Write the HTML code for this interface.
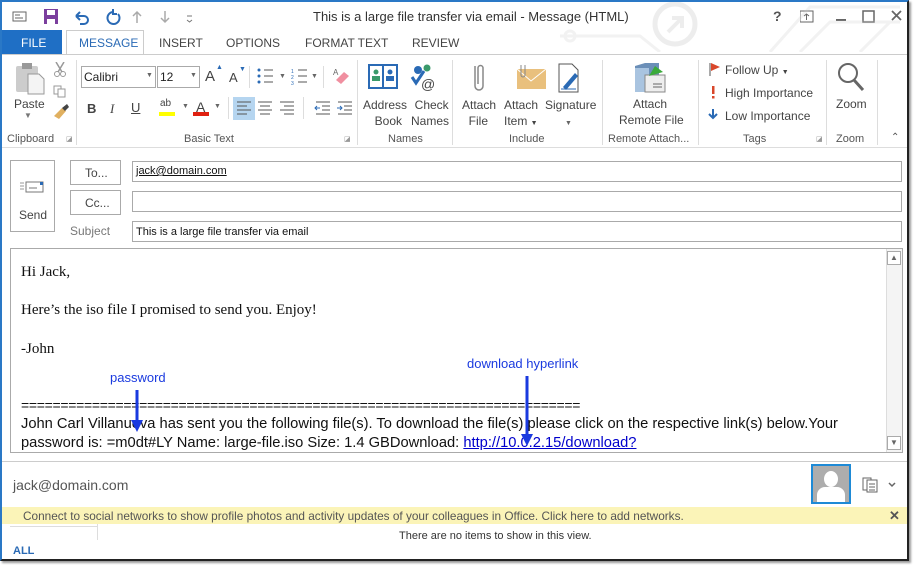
<!DOCTYPE html>
<html><head><style>
*{margin:0;padding:0;box-sizing:border-box}
body{width:914px;height:565px;background:#fff;font-family:"Liberation Sans",sans-serif;position:relative;overflow:hidden}
.a{position:absolute}
.win{left:0;top:0;width:909px;height:561px;border-left:2px solid #2a78c6;border-top:2px solid #2a78c6;border-right:2px solid #222;border-bottom:2px solid #222;box-shadow:2px 2px 2px #999}
.t{position:absolute;font-size:12px;color:#444;white-space:nowrap}
.lbl{font-size:11px;color:#555}
.box{position:absolute;border:1px solid #aaa;background:#fff}
.sep{position:absolute;width:1px;background:#ddd}
.ser{font-family:"Liberation Serif",serif;font-size:15px;color:#111;position:absolute;white-space:nowrap}
</style></head><body>
<div class="a win"></div>
<svg class="a" style="left:12px;top:8px" width="200" height="18">
<rect x="1" y="4" width="13" height="9" fill="none" stroke="#666"/><line x1="3" y1="7" x2="8" y2="7" stroke="#666"/><line x1="3" y1="10" x2="11" y2="10" stroke="#666"/>
<rect x="32" y="1" width="14" height="15" fill="#7b3f9e"/><rect x="35" y="2" width="8" height="5" fill="#fff"/><rect x="35" y="11" width="8" height="5" fill="#fff"/>
<path d="M64 8 h8 a4 4 0 0 1 0 8 h-4 M64 8 l4 -4 M64 8 l4 4" fill="none" stroke="#2a6ab5" stroke-width="2"/>
<path d="M101 4 a6 6 0 1 0 5 2 M101 1 v5 h4" fill="none" stroke="#2a6ab5" stroke-width="2"/>
<path d="M125 15 v-11 M121 8 l4-4 4 4" stroke="#aaa" fill="none" stroke-width="1.5"/>
<path d="M153 3 v11 M149 10 l4 4 4-4" stroke="#aaa" fill="none" stroke-width="1.5"/>
<path d="M175 8 h5 M175 12 l2.5 2 2.5-2" stroke="#777" fill="none"/>
</svg>
<div class="t" style="left:313px;top:9px;font-size:13px;color:#333">This is a large file transfer via email - Message (HTML)</div>
<div class="t" style="left:773px;top:8px;font-size:14px;font-weight:bold;color:#555">?</div>
<svg class="a" style="left:800px;top:9px" width="110" height="16"><rect x="0" y="2" width="13" height="11" fill="none" stroke="#666"/><path d="M6.5 11 v-6 M4 7 l2.5-2 2.5 2" stroke="#666" fill="none"/><line x1="36" y1="11" x2="46" y2="11" stroke="#666" stroke-width="2"/><rect x="63" y="2" width="11" height="11" fill="none" stroke="#666" stroke-width="1.5"/><path d="M92 2 l9 9 M101 2 l-9 9" stroke="#666" stroke-width="1.8"/></svg>
<svg class="a" style="left:560px;top:2px" width="345" height="50" opacity="0.25"><circle cx="115" cy="22" r="20" fill="none" stroke="#bbb" stroke-width="5"/><path d="M108 30 l14-14 M112 16 h10 v10" stroke="#bbb" stroke-width="4" fill="none"/><path d="M0 34 h80 l20 16 M240 50 l30-30 h70 M210 50 l40-45 h90 M300 50 l30-30" stroke="#ccc" stroke-width="3" fill="none"/><circle cx="10" cy="34" r="5" fill="none" stroke="#ccc" stroke-width="3"/></svg>
<div class="a" style="left:2px;top:30px;width:60px;height:24px;background:#1f6fc5"></div>
<div class="t" style="left:21px;top:36px;color:#fff">FILE</div>
<div class="a" style="left:66px;top:30px;width:78px;height:25px;border:1px solid #ccc;border-bottom:none;background:#fff"></div>
<div class="t" style="left:79px;top:36px;color:#2a6ab5">MESSAGE</div>
<div class="t" style="left:159px;top:36px">INSERT</div>
<div class="t" style="left:226px;top:36px">OPTIONS</div>
<div class="t" style="left:305px;top:36px">FORMAT TEXT</div>
<div class="t" style="left:412px;top:36px">REVIEW</div>
<div class="a" style="left:2px;top:54px;width:905px;height:1px;background:#ccc"></div>
<div class="a" style="left:2px;top:147px;width:905px;height:1px;background:#ddd"></div>
<svg class="a" style="left:14px;top:62px" width="60" height="60"><rect x="2" y="4" width="22" height="26" fill="#ccc" rx="2"/><rect x="8" y="1" width="10" height="6" fill="#999"/><path d="M14 12 h11 l5 5 v15 h-16z" fill="#f4f4f4" stroke="#999"/><path d="M42 0 l6 10 M50 0 l-6 10" stroke="#999" stroke-width="1.5"/><circle cx="43" cy="12" r="2.5" fill="none" stroke="#999"/><circle cx="49" cy="12" r="2.5" fill="none" stroke="#999"/><rect x="40" y="24" width="7" height="8" fill="none" stroke="#999"/><rect x="44" y="27" width="7" height="8" fill="#fff" stroke="#999"/><path d="M40 54 l8-8 4 3 -7 8z" fill="#e0b060"/><path d="M48 46 l5-4 2 3 -4 4" fill="#444"/></svg>
<div class="t" style="left:14px;top:97px">Paste</div>
<div class="t" style="left:24px;top:111px;font-size:8px;color:#777">▼</div>
<div class="t lbl" style="left:7px;top:133px">Clipboard</div>
<div class="t" style="left:66px;top:135px;font-size:7px;color:#999">◪</div>
<div class="sep" style="left:76px;top:60px;height:85px"></div>
<div class="box" style="left:81px;top:66px;width:75px;height:22px"></div><div class="t" style="left:84px;top:70px;color:#222">Calibri</div><div class="t" style="left:146px;top:72px;font-size:7px;color:#666">▼</div>
<div class="box" style="left:157px;top:66px;width:43px;height:22px"></div><div class="t" style="left:160px;top:70px;color:#222">12</div><div class="t" style="left:190px;top:72px;font-size:7px;color:#666">▼</div>
<div class="t" style="left:205px;top:68px;font-size:15px">A</div><div class="t" style="left:216px;top:64px;font-size:7px;color:#2a6ab5">▲</div>
<div class="t" style="left:229px;top:70px;font-size:13px">A</div><div class="t" style="left:239px;top:66px;font-size:7px;color:#2a6ab5">▼</div>
<div class="sep" style="left:249px;top:66px;height:22px"></div>
<svg class="a" style="left:256px;top:67px" width="60" height="20"><g fill="#2a6ab5"><circle cx="3" cy="3" r="1.5"/><circle cx="3" cy="9" r="1.5"/><circle cx="3" cy="15" r="1.5"/></g><g stroke="#555"><line x1="8" y1="3" x2="17" y2="3"/><line x1="8" y1="9" x2="17" y2="9"/><line x1="8" y1="15" x2="17" y2="15"/><line x1="42" y1="3" x2="51" y2="3"/><line x1="42" y1="9" x2="51" y2="9"/><line x1="42" y1="15" x2="51" y2="15"/></g><text x="35" y="6" font-size="5" fill="#2a6ab5">1</text><text x="35" y="12" font-size="5" fill="#2a6ab5">2</text><text x="35" y="18" font-size="5" fill="#2a6ab5">3</text></svg>
<div class="t" style="left:279px;top:73px;font-size:7px;color:#666">▼</div><div class="t" style="left:311px;top:73px;font-size:7px;color:#666">▼</div>
<div class="sep" style="left:323px;top:66px;height:22px"></div>
<svg class="a" style="left:332px;top:66px" width="20" height="20"><path d="M4 14 l8-8 5 4 -8 8z" fill="#f08fa0"/><text x="1" y="9" font-size="8" fill="#666">A</text></svg>
<div class="t" style="left:87px;top:101px;font-weight:bold;font-size:13px">B</div>
<div class="t" style="left:110px;top:101px;font-style:italic;font-size:13px;font-family:'Liberation Serif',serif">I</div>
<div class="t" style="left:131px;top:100px;text-decoration:underline;font-size:13px">U</div>
<div class="t" style="left:160px;top:98px;font-size:10px">ab</div><div class="a" style="left:159px;top:112px;width:16px;height:4px;background:#ff0"></div><div class="t" style="left:182px;top:103px;font-size:7px;color:#666">▼</div>
<div class="t" style="left:196px;top:99px;font-size:14px">A</div><div class="a" style="left:193px;top:112px;width:16px;height:4px;background:#e02010"></div><div class="t" style="left:214px;top:103px;font-size:7px;color:#666">▼</div>
<div class="sep" style="left:228px;top:97px;height:22px"></div>
<div class="a" style="left:233px;top:97px;width:22px;height:23px;background:#b5d5f0"></div>
<svg class="a" style="left:236px;top:101px" width="120" height="14"><g stroke="#555"><path d="M1 1h14M1 5h10M1 9h14M1 13h10"/><path d="M22 1h14M24 5h10M22 9h14M24 13h10"/><path d="M44 1h14M48 5h10M44 9h14M48 13h10"/><path d="M80 1h14M86 5h8M86 9h8M80 13h14"/><path d="M102 1h14M108 5h8M108 9h8M102 13h14"/></g><path d="M84 7h-5 M81 5l-2 2 2 2" stroke="#2a6ab5" fill="none"/><path d="M101 7h5 M104 5l2 2-2 2" stroke="#2a6ab5" fill="none"/></svg>
<div class="sep" style="left:303px;top:97px;height:22px"></div>
<div class="t lbl" style="left:184px;top:133px">Basic Text</div>
<div class="t" style="left:344px;top:135px;font-size:7px;color:#999">◪</div>
<div class="sep" style="left:357px;top:60px;height:85px"></div>
<svg class="a" style="left:367px;top:63px" width="70" height="30"><rect x="1" y="1" width="30" height="25" fill="#2a6ab5"/><rect x="3" y="3" width="12" height="21" fill="#fff"/><rect x="17" y="3" width="12" height="21" fill="#fff"/><circle cx="9" cy="9" r="2.5" fill="#3a9a6a"/><rect x="5" y="13" width="8" height="5" fill="#3a9a6a"/><circle cx="23" cy="9" r="2.5" fill="#2a6ab5"/><rect x="19" y="13" width="8" height="5" fill="#2a6ab5"/><circle cx="51" cy="7" r="4" fill="#2a6ab5"/><circle cx="60" cy="5" r="3.5" fill="#3a9a6a"/><path d="M45 14 l4 6 8-12" stroke="#2a6ab5" stroke-width="3" fill="none"/><text x="54" y="26" font-size="14" fill="#444">@</text></svg>
<div class="t" style="left:363px;top:97px;text-align:center;line-height:16px">Address<br>&nbsp;&nbsp;Book</div>
<div class="t" style="left:411px;top:97px;text-align:center;line-height:16px">&nbsp;Check<br>Names</div>
<div class="t lbl" style="left:388px;top:133px">Names</div>
<div class="sep" style="left:452px;top:60px;height:85px"></div>
<svg class="a" style="left:468px;top:63px" width="120" height="30"><path d="M7 3 v20 a4 4 0 0 0 8 0 v-18 a2.5 2.5 0 0 0 -5 0 v16" fill="none" stroke="#888" stroke-width="1.5"/><rect x="49" y="6" width="29" height="20" fill="#e9c07d"/><path d="M49 6 l14 12 15-12" fill="none" stroke="#fff"/><path d="M53 2 v10 a2 2 0 0 0 4 0 v-10" fill="none" stroke="#888"/><path d="M91 1 h13 l6 6 v22 h-19z" fill="#fff" stroke="#555"/><path d="M95 24 l12-14 3 3 -12 14z" fill="#2a6ab5"/><line x1="93" y1="26" x2="108" y2="26" stroke="#2a6ab5"/></svg>
<div class="t" style="left:462px;top:97px;line-height:16px">Attach<br>&nbsp;&nbsp;File</div>
<div class="t" style="left:504px;top:97px;line-height:16px">Attach<br>Item <span style="font-size:7px">▼</span></div>
<div class="t" style="left:545px;top:97px;line-height:16px">Signature<br>&nbsp;&nbsp;&nbsp;&nbsp;&nbsp;&nbsp;<span style="font-size:7px;color:#666">▼</span></div>
<div class="t lbl" style="left:509px;top:133px">Include</div>
<div class="sep" style="left:602px;top:60px;height:85px"></div>
<svg class="a" style="left:633px;top:62px" width="36" height="32"><path d="M2 4 l10-3 h14 v25 l-10 4 h-14z" fill="#6b8fb8"/><rect x="2" y="6" width="14" height="24" fill="#a9c4e0"/><rect x="12" y="13" width="20" height="17" fill="#eee" stroke="#888"/><path d="M16 14 l6-10 8 6z" fill="#3aaa3a"/><line x1="20" y1="22" x2="29" y2="22" stroke="#666"/><line x1="20" y1="25" x2="29" y2="25" stroke="#666"/></svg>
<div class="t" style="left:633px;top:97px">Attach</div>
<div class="t" style="left:619px;top:113px">Remote File</div>
<div class="t lbl" style="left:608px;top:133px">Remote Attach...</div>
<div class="sep" style="left:698px;top:60px;height:85px"></div>
<svg class="a" style="left:708px;top:62px" width="14" height="60"><line x1="2" y1="1" x2="2" y2="14" stroke="#555"/><path d="M3 1 l9 4 -9 4z" fill="#d9472b"/><rect x="4" y="24" width="2.5" height="8" fill="#d9472b"/><rect x="4" y="34" width="2.5" height="2.5" fill="#d9472b"/><path d="M5 47 v9 M1 52 l4 4 4-4" stroke="#2a6ab5" stroke-width="2" fill="none"/></svg>
<div class="t" style="left:725px;top:63px">Follow Up <span style="font-size:7px">▼</span></div>
<div class="t" style="left:725px;top:86px">High Importance</div>
<div class="t" style="left:725px;top:109px">Low Importance</div>
<div class="t lbl" style="left:743px;top:133px">Tags</div>
<div class="t" style="left:816px;top:135px;font-size:7px;color:#999">◪</div>
<div class="sep" style="left:826px;top:60px;height:85px"></div>
<svg class="a" style="left:836px;top:62px" width="30" height="32"><circle cx="12" cy="11" r="9" fill="none" stroke="#666" stroke-width="2"/><line x1="18" y1="18" x2="27" y2="28" stroke="#666" stroke-width="3"/></svg>
<div class="t" style="left:836px;top:97px">Zoom</div>
<div class="t lbl" style="left:836px;top:133px">Zoom</div>
<div class="sep" style="left:877px;top:60px;height:85px"></div>
<div class="t" style="left:891px;top:132px;font-size:10px;color:#555">⌃</div>
<div class="box" style="left:10px;top:160px;width:45px;height:72px"></div>
<svg class="a" style="left:20px;top:180px" width="30" height="14"><rect x="6" y="2" width="17" height="10" fill="none" stroke="#777"/><rect x="20" y="2" width="3" height="3" fill="#2a6ab5"/><path d="M0 3h4M0 6h4M0 9h4" stroke="#999"/><line x1="9" y1="8" x2="17" y2="8" stroke="#777"/></svg>
<div class="t" style="left:19px;top:208px">Send</div>
<div class="box" style="left:70px;top:160px;width:51px;height:25px"></div><div class="t" style="left:85px;top:166px">To...</div>
<div class="box" style="left:70px;top:190px;width:51px;height:25px"></div><div class="t" style="left:85px;top:196px">Cc...</div>
<div class="t" style="left:70px;top:224px;color:#777">Subject</div>
<div class="box" style="left:132px;top:161px;width:770px;height:21px"></div><div class="t" style="left:136px;top:165px;font-size:11px;color:#111;text-decoration:underline">jack@domain.com</div>
<div class="box" style="left:132px;top:191px;width:770px;height:21px"></div>
<div class="box" style="left:132px;top:221px;width:770px;height:21px"></div><div class="t" style="left:136px;top:226px;font-size:11px;color:#111">This is a large file transfer via email</div>
<div class="box" style="left:10px;top:248px;width:893px;height:205px"></div>
<div class="a" style="left:886px;top:249px;width:16px;height:203px;background:#f4f4f4;border-left:1px solid #ddd"></div>
<div class="box" style="left:887px;top:251px;width:14px;height:14px"></div><div class="t" style="left:890px;top:253px;font-size:8px;color:#666">▲</div>
<div class="box" style="left:887px;top:436px;width:14px;height:14px"></div><div class="t" style="left:890px;top:438px;font-size:8px;color:#666">▼</div>
<div class="ser" style="left:21px;top:264px">Hi Jack,</div>
<div class="ser" style="left:21px;top:302px">Here’s the iso file I promised to send you. Enjoy!</div>
<div class="ser" style="left:21px;top:341px">-John</div>
<div class="t" style="left:21px;top:397px;font-size:14px;color:#111;letter-spacing:-0.3px">=======================================================================</div>
<div class="t" style="left:21px;top:416px;font-size:14.7px;color:#111">John Carl Villanueva has sent you the following file(s). To download the file(s) please click on the respective link(s) below.Your</div>
<div class="t" style="left:21px;top:435px;font-size:14.7px;color:#111">password is: =m0dt#LY Name: large-file.iso Size: 1.4 GBDownload: <span style="color:#00c;text-decoration:underline">http://10.0.2.15/download?</span></div>
<div class="t" style="left:110px;top:370px;color:#1a3adf;font-size:13px">password</div>
<div class="t" style="left:467px;top:356px;color:#1a3adf;font-size:13px">download hyperlink</div>
<svg class="a" style="left:128px;top:388px" width="20" height="50"><path d="M9 2 v34" stroke="#1a3adf" stroke-width="3"/><path d="M3 32 l6 12 6-12z" fill="#1a3adf"/></svg>
<svg class="a" style="left:518px;top:374px" width="20" height="80"><path d="M9 2 v62" stroke="#1a3adf" stroke-width="3"/><path d="M3 60 l6 12 6-12z" fill="#1a3adf"/></svg>
<div class="a" style="left:2px;top:461px;width:905px;height:1px;background:#ccc"></div>
<div class="t" style="left:13px;top:477px;font-size:14px;color:#555">jack@domain.com</div>
<div class="a" style="left:811px;top:464px;width:40px;height:40px;border:2px solid #1e8ad6;background:#adadad;overflow:hidden"><div class="a" style="left:11px;top:5px;width:14px;height:16px;border-radius:50%;background:#fff"></div><div class="a" style="left:4px;top:21px;width:28px;height:20px;border-radius:8px 8px 0 0;background:#fff"></div></div>
<svg class="a" style="left:862px;top:475px" width="40" height="20"><rect x="1" y="3" width="8" height="12" fill="#fff" stroke="#666"/><rect x="5" y="5" width="10" height="12" fill="#fff" stroke="#666"/><path d="M7 9h6M7 12h6M7 15h6" stroke="#666"/><path d="M27 8 l3 3 3-3" stroke="#666" stroke-width="1.5" fill="none"/></svg>
<div class="a" style="left:2px;top:507px;width:905px;height:17px;background:#fbf4b8"></div>
<div class="t" style="left:23px;top:509px;font-size:11.8px;color:#555">Connect to social networks to show profile photos and activity updates of your colleagues in Office. Click here to add networks.</div>
<div class="t" style="left:889px;top:508px;font-size:13px;font-weight:bold;color:#555">✕</div>
<div class="a" style="left:10px;top:526px;width:87px;height:1px;background:#ddd"></div>
<div class="a" style="left:97px;top:524px;width:1px;height:16px;background:#ddd"></div>
<div class="t" style="left:13px;top:545px;font-size:11px;font-weight:bold;color:#2a6ab5">ALL</div>
<div class="t" style="left:399px;top:530px;font-size:11px;color:#333">There are no items to show in this view.</div>
</body></html>
